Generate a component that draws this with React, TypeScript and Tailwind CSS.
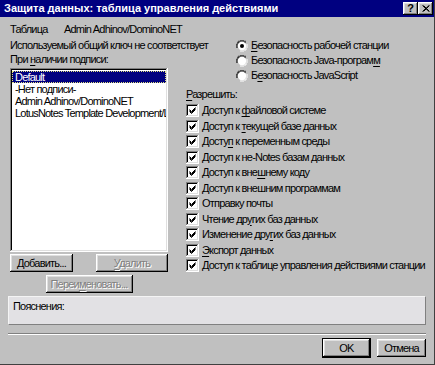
import React from "react";

const raised =
  "bg-[#c0c0c0] shadow-[inset_-1px_-1px_#000,inset_1px_1px_#fff,inset_-2px_-2px_#808080,inset_2px_2px_#dfdfdf]";
const sunken =
  "shadow-[inset_-1px_-1px_#fff,inset_1px_1px_#808080,inset_-2px_-2px_#dfdfdf,inset_2px_2px_#000]";

const U = ({ children }: { children: React.ReactNode }) => <span className="underline underline-offset-2">{children}</span>;

const Radio = ({ checked, children }: { checked?: boolean; children: React.ReactNode }) => (
  <div className="h-[15px] flex items-center gap-[3px]">
    <svg width="12" height="12" viewBox="0 0 12 12" className="shrink-0">
      <path d="M4 0h4M2 1h2M8 1h2M1 2h1M0 4v4M1 3v2" stroke="#808080" strokeWidth="1" fill="none" />
      <path d="M4 1h4M2 2h2M8 2h2M2 2v1M1 4v4M2 3v1" stroke="#000" strokeWidth="1" fill="none" />
      <circle cx="6" cy="6" r="4.2" fill="#fff" />
      <path d="M11 4v4M10 8v2M8 10h2M4 11h4" stroke="#fff" strokeWidth="1" fill="none" />
      {checked && <circle cx="6" cy="6" r="2" fill="#000" />}
    </svg>
    <span className="whitespace-nowrap">{children}</span>
  </div>
);

const Check = ({ children }: { children: React.ReactNode }) => (
  <div className="h-[15.5px] flex items-center gap-[3px]">
    <div className={`w-[13px] h-[13px] bg-white shrink-0 flex items-center justify-center ${sunken}`}>
      <svg width="7" height="7" viewBox="0 0 7 7">
        <path d="M0.5 2.5 L2.5 4.5 L6.5 0.5 M0.5 3.5 L2.5 5.5 L6.5 1.5 M0.5 4.5 L2.5 6.5 L6.5 2.5" stroke="#000" strokeWidth="1" fill="none" />
      </svg>
    </div>
    <span className="whitespace-nowrap">{children}</span>
  </div>
);

const Btn = ({ children, disabled, className = "" }: { children: React.ReactNode; disabled?: boolean; className?: string }) => (
  <div className={`h-[18px] flex items-center justify-center ${raised} ${className}`}>
    <span className={disabled ? "text-[#808080] [text-shadow:1px_1px_#fff]" : ""}>{children}</span>
  </div>
);

const permissions: React.ReactNode[] = [
  <>Доступ к <U>ф</U>айловой системе</>,
  <>Доступ к <U>т</U>екущей базе данных</>,
  <>Досту<U>п</U> к переменным среды</>,
  <>Доступ к не-Notes базам данных</>,
  <>Доступ к вне<U>ш</U>нему коду</>,
  <>Доступ к внешним программам</>,
  <>Отправку почты</>,
  <>Чтение др<U>у</U>гих баз данных</>,
  <>Изменение дру<U>г</U>их баз данных</>,
  <><U>Э</U>кспорт данных</>,
  <>Доступ к таблице управления действиями станции</>,
];

export default function App() {
  return (
    <div className="w-[435px] h-[365px] bg-[#c0c0c0] flex flex-col font-['Liberation_Sans',Arial,sans-serif] text-[11px] leading-[13px] tracking-[-0.8px] text-black border-r border-b border-[#404040] overflow-hidden">
      <div className="h-[17px] shrink-0 bg-[#000080] flex items-center justify-between pl-[4px] pr-[1px]">
        <span className="text-white font-bold text-[11px] tracking-normal whitespace-nowrap">
          Защита данных: таблица управления действиями
        </span>
        <div className="flex">
          <div className={`w-[15px] h-[13px] flex items-center justify-center font-bold text-[11px] tracking-normal ${raised}`}>?</div>
          <div className={`w-[15px] h-[13px] flex items-center justify-center ${raised}`}>
            <svg width="8" height="7" viewBox="0 0 8 7">
              <path d="M0.5 0.5 L7 6.5 M1.5 0.5 L7.5 6.5 M7 0.5 L0.5 6.5 M7.5 0.5 L1.5 6.5" stroke="#000" strokeWidth="1" fill="none" />
            </svg>
          </div>
        </div>
      </div>

      <div className="flex-1 flex flex-col px-[8px]">
        <div className="mt-[6px] pl-[2px] flex whitespace-nowrap">
          <span className="w-[54px]">Таблица</span>
          <span>Admin Adhinov/DominoNET</span>
        </div>

        <div className="mt-[2px] flex">
          <div className="w-[178px] pl-[2px] pt-[1px] flex flex-col">
            <span className="whitespace-nowrap">Используемый общий ключ не соответствует</span>
            <span className="mt-[1px] whitespace-nowrap">При <U>н</U>аличии подписи:</span>
            <div className={`mt-[2px] h-[184px] w-[158px] bg-white p-[2px] pt-[3px] ${sunken}`}>
              <div className="h-[12px] leading-[12px] bg-[#000080] text-white pl-[3px] outline-1 outline-dotted outline-[#e0e080] -outline-offset-1">
                Default
              </div>
              <div className="h-[12px] leading-[12px] pl-[3px]">-Нет подписи-</div>
              <div className="h-[12px] leading-[12px] pl-[3px]">Admin Adhinov/DominoNET</div>
              <div className="h-[12px] leading-[12px] pl-[3px] whitespace-nowrap overflow-hidden">LotusNotes Template Development/L</div>
            </div>
            <div className="mt-[2px] w-[158px] flex justify-between">
              <Btn className="w-[63px]">Добавить...</Btn>
              <Btn disabled className="w-[72px]"><U>У</U>далить</Btn>
            </div>
            <div className="mt-[3px] w-[158px] flex justify-center">
              <Btn disabled className="w-[87px]">Переи<U>м</U>еновать...</Btn>
            </div>
          </div>

          <div className="flex-1 flex flex-col">
            <div className="ml-[50px] flex flex-col">
              <Radio checked><U>Б</U>езопасность рабочей станции</Radio>
              <Radio>Безопасность Java-програм<U>м</U></Radio>
              <Radio>Б<U>е</U>зопасность JavaScript</Radio>
            </div>
            <span className="mt-[5px]"><U>Р</U>азрешить:</span>
            <div className="mt-[2px] flex flex-col">
              {permissions.map((p, i) => (
                <Check key={i}>{p}</Check>
              ))}
            </div>
          </div>
        </div>

        <div className="mt-[3px] h-[29px] bg-[#e2e1e4] border-t border-l border-[#f4f4f4] border-r border-b border-r-[#808080] border-b-[#808080] px-[4px] pt-[3px]">
          Пояснения:
        </div>

        <div className="mt-[8px] h-[2px] border-t border-[#808080] border-b border-b-white" />

        <div className="mt-[4px] flex justify-end gap-[7px]">
          <Btn className="w-[47px] outline outline-black">OK</Btn>
          <Btn className="w-[49px]">Отмена</Btn>
        </div>
      </div>
    </div>
  );
}
